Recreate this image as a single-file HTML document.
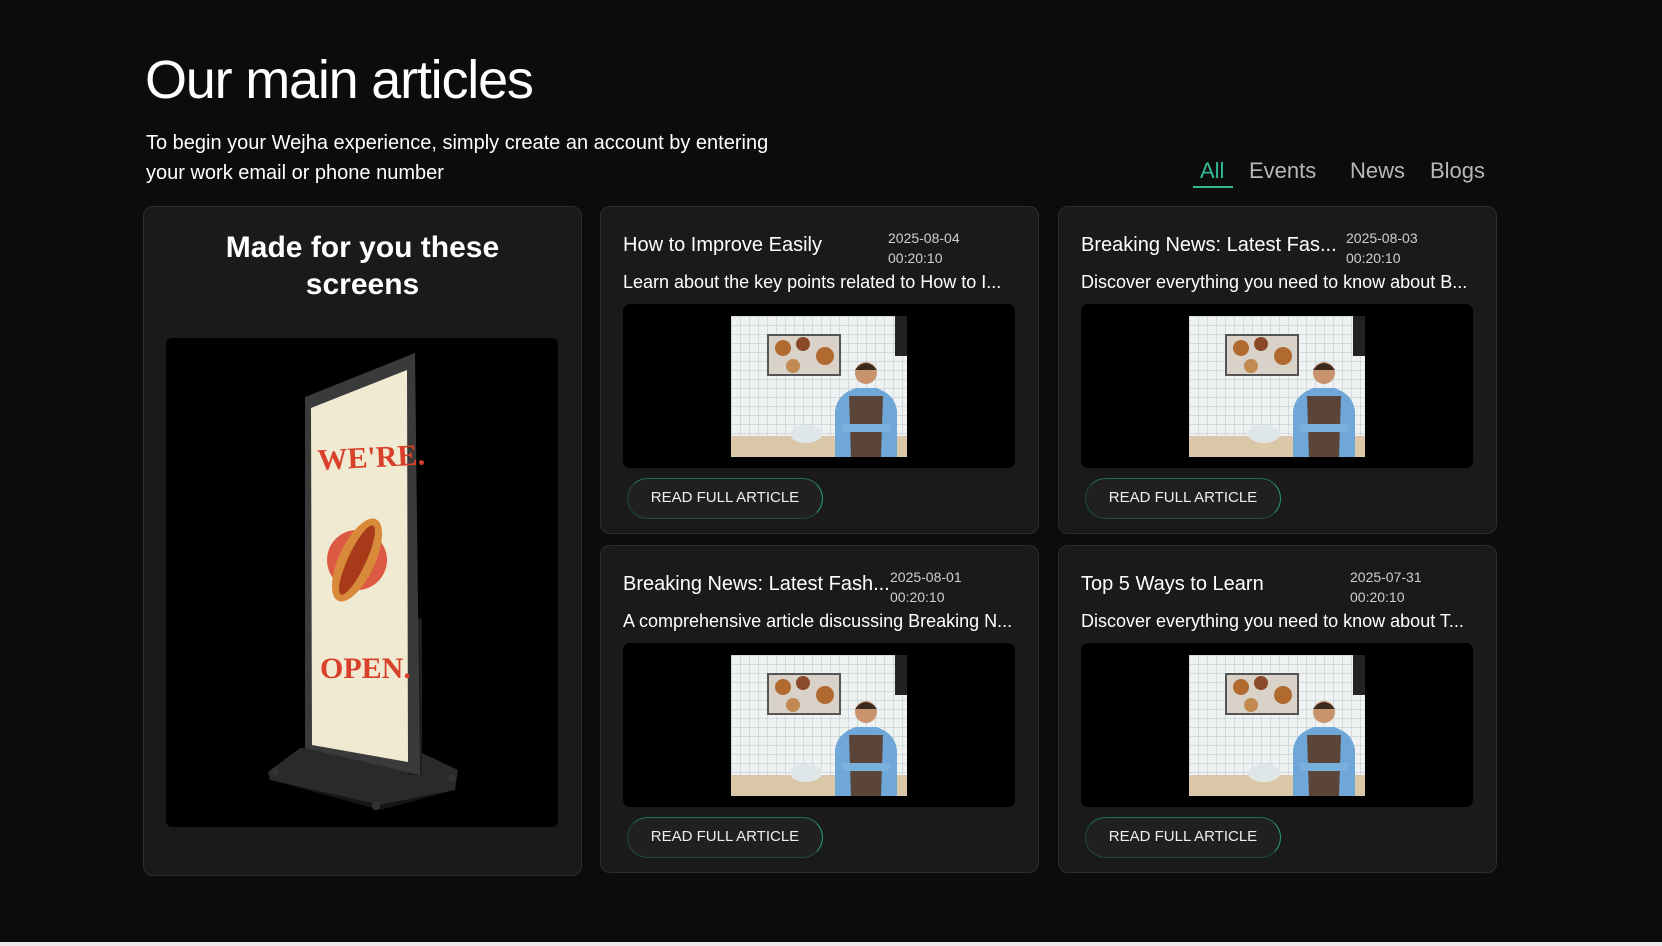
<!DOCTYPE html>
<html><head><meta charset="utf-8"><style>
*{margin:0;padding:0;box-sizing:border-box}
body{width:1662px;height:946px;background:#0c0c0c;font-family:"Liberation Sans",sans-serif;color:#fff;position:relative;overflow:hidden}
h1{position:absolute;left:145px;top:49px;font-size:54px;font-weight:400;letter-spacing:-1.2px}
.sub{position:absolute;left:146px;top:128px;font-size:20px;line-height:30px;width:660px}
.tabs{position:absolute;top:158px;font-size:22px;color:#b8b8b8}
.tab{position:absolute;top:0;white-space:nowrap}
.ul{position:absolute;left:1193px;top:186px;width:40px;height:2px;background:#35b895}
.card{position:absolute;background:#1a1a1a;border:1.5px solid #2a2e33;border-radius:10px}
.big h2{position:absolute;left:0;right:0;top:22px;text-align:center;font-size:30px;line-height:37px;font-weight:700}
.t{position:absolute;left:22px;top:27px;font-size:20px;white-space:nowrap}
.d{position:absolute;top:21px;font-size:14px;line-height:20px;color:#cfcfcf}
.ds{position:absolute;left:22px;top:65px;font-size:18px;white-space:nowrap}
.box{position:absolute;left:22px;top:97px;width:392px;height:164px;background:#000;border-radius:7px}
.box svg{position:absolute;left:108px;top:12px}
.btn{position:absolute;left:26px;top:271px;width:196px;height:41px;border-radius:21px;background:#202020;border:1.5px solid #1d4a42;border-right-color:#2a9b83;border-top-color:#256a5c;font-size:15px;text-align:center;line-height:38px;color:#eee}
.foot{position:absolute;left:0;top:942px;width:1662px;height:4px;background:#eee6ea}
</style></head><body>
<h1>Our main articles</h1>
<div class="sub">To begin your Wejha experience, simply create an account by entering your work email or phone number</div>
<div class="tabs"><span class="tab" style="left:1200px;color:#35b895">All</span><span class="tab" style="left:1249px">Events</span><span class="tab" style="left:1350px">News</span><span class="tab" style="left:1430px">Blogs</span></div>
<div class="ul"></div>

<div class="card big" style="left:143px;top:206px;width:439px;height:670px">
<h2>Made for you these<br>screens</h2>
<div style="position:absolute;left:22px;top:131px;width:392px;height:489px;background:#000;border-radius:6px"></div>
</div>
<svg style="position:absolute;left:0;top:0" width="1662" height="946">
<path d="M268 772 L300 748 L420 752 L458 770 L455 790 L380 805 L270 780Z" fill="#2a2a2a"/>
<path d="M270 780 L380 805 L455 790 L380 810Z" fill="#151515"/>
<circle cx="275" cy="772" r="4" fill="#333"/><circle cx="376" cy="806" r="4" fill="#333"/><circle cx="452" cy="778" r="4" fill="#333"/>
<path d="M408 610 L422 620 L422 775 L408 775Z" fill="#1e1e1e"/>
<path d="M305 397 L415 353 L420 775 L305 748Z" fill="#3a3a3a"/>
<path d="M311 408 L407 370 L408 762 L312 745Z" fill="#f1ead2"/>
<text x="318" y="470" font-family="Liberation Serif" font-weight="700" font-size="30" fill="#d8402a" transform="rotate(-3 318 470)">WE'RE.</text>
<circle cx="357" cy="560" r="30" fill="#d8402a" opacity=".85"/>
<ellipse cx="357" cy="560" rx="18" ry="45" fill="#d88a3a" transform="rotate(25 357 560)"/>
<ellipse cx="357" cy="560" rx="9" ry="38" fill="#a83a1a" transform="rotate(25 357 560)"/>
<text x="320" y="678" font-family="Liberation Serif" font-weight="700" font-size="30" fill="#d8402a">OPEN.</text>
</svg>

<div class="card" style="left:600px;top:206px;width:439px;height:328px">
<div class="t">How to Improve Easily</div><div class="d" style="left:287px">2025-08-04<br>00:20:10</div>
<div class="ds">Learn about the key points related to How to I...</div>
<div class="box"><svg width="176" height="141"><use href="#ph"/></svg></div>
<div class="btn">READ FULL ARTICLE</div></div>

<div class="card" style="left:1058px;top:206px;width:439px;height:328px">
<div class="t">Breaking News: Latest Fas...</div><div class="d" style="left:287px">2025-08-03<br>00:20:10</div>
<div class="ds">Discover everything you need to know about B...</div>
<div class="box"><svg width="176" height="141"><use href="#ph"/></svg></div>
<div class="btn">READ FULL ARTICLE</div></div>

<div class="card" style="left:600px;top:545px;width:439px;height:328px">
<div class="t">Breaking News: Latest Fash...</div><div class="d" style="left:289px">2025-08-01<br>00:20:10</div>
<div class="ds">A comprehensive article discussing Breaking N...</div>
<div class="box"><svg width="176" height="141"><use href="#ph"/></svg></div>
<div class="btn">READ FULL ARTICLE</div></div>

<div class="card" style="left:1058px;top:545px;width:439px;height:328px">
<div class="t">Top 5 Ways to Learn</div><div class="d" style="left:291px">2025-07-31<br>00:20:10</div>
<div class="ds">Discover everything you need to know about T...</div>
<div class="box"><svg width="176" height="141"><use href="#ph"/></svg></div>
<div class="btn">READ FULL ARTICLE</div></div>

<svg width="0" height="0" style="position:absolute"><defs>
<pattern id="tile" width="9" height="9" patternUnits="userSpaceOnUse"><rect width="9" height="9" fill="#eef2f2"/><path d="M0 0H9M0 0V9" stroke="#b9c4c6" stroke-width="1"/></pattern>
<g id="ph">
<rect width="176" height="141" fill="url(#tile)"/>
<rect x="36" y="18" width="74" height="42" fill="#555"/><rect x="38" y="20" width="70" height="38" fill="#d8d2c8"/>
<circle cx="52" cy="32" r="8" fill="#b06a30"/><circle cx="72" cy="28" r="7" fill="#8a4a2a"/><circle cx="94" cy="40" r="9" fill="#b06a30"/><circle cx="62" cy="50" r="7" fill="#c08a50"/>
<rect x="164" y="0" width="12" height="40" fill="#222"/>
<rect x="0" y="120" width="176" height="21" fill="#d9c7a8"/>
<ellipse cx="75" cy="118" rx="16" ry="9" fill="#dfe6e8"/>
<path d="M104 141 L104 95 Q106 78 125 72 L145 72 Q164 78 166 95 L166 141Z" fill="#6fa8d8"/>
<path d="M118 80 L152 80 L150 141 L120 141Z" fill="#5a4538"/>
<circle cx="135" cy="57" r="11" fill="#c9936e"/><path d="M124 54 Q135 40 146 54" fill="#3a2a1e"/>
<path d="M110 108 L160 108 L158 116 L112 116Z" fill="#7ab0dc"/>
</g></defs></svg>
<div class="foot"></div>
</body></html>
